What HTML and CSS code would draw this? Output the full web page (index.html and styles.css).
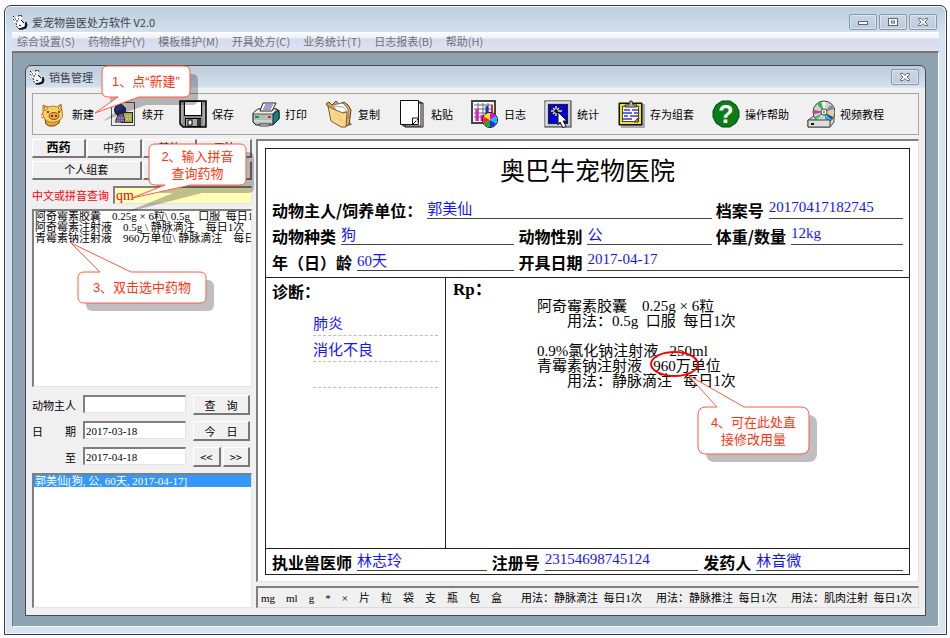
FILE: index.html
```html
<!DOCTYPE html>
<html lang="zh-CN">
<head>
  <meta charset="UTF-8" />
  <title>爱宠物兽医处方软件 V2.0</title>
  <link rel="stylesheet" href="styles.css">
</head>
<body>
  <svg class="defs" width="0" height="0">
    <symbol id="cat" viewBox="0 0 16 16">
      <path d="M1 3l2 1 1-2 2 1 3-1 1 2-1 3 3 3 1 3-1 2H6l-2-3-1-4-2-1z" fill="#fff" />
      <path d="M1 2l2 2M1 5l2 2M6 2l3-1 1 2M4 9l1 4 2 2h5" fill="none" stroke="#111" stroke-dasharray="2 1" />
      <path d="M9 6l3 3M3 5h1M6 5h1M4 7h2M7 11l2 1" stroke="#111" fill="none" />
      <path d="M14 8l1 3-1 3-3 1-4 0 3-1 3-1z" fill="#111" stroke="#111" />
    </symbol>
    <symbol id="cross" viewBox="0 0 12 10">
      <path d="M1.500 1.500h2.500l2 2 2-2h2.500v1l-2.500 2.500 2.500 2.500v1h-2.500l-2-2-2 2h-2.500v-1l2.500-2.500-2.500-2.500z" fill="#fff" stroke="#5b6577" />
    </symbol>
  </svg>

  <div class="window">
    <div class="title-bar">
      <svg class="cat"><use href="#cat" /></svg>
      <span class="caption">爱宠物兽医处方软件 V2.0</span>
      <button class="win-btn" aria-label="最小化">
        <svg viewBox="0 0 12 10"><rect x="1.500" y="4.500" width="9" height="3" fill="#fff" stroke="#5b6577" /></svg>
      </button>
      <button class="win-btn" aria-label="还原">
        <svg viewBox="0 0 12 10"><rect x="1.500" y="1.500" width="9" height="7" fill="#fff" stroke="#5b6577" /><rect x="4.500" y="4" width="3" height="2" fill="#fff" stroke="#5b6577" /></svg>
      </button>
      <button class="win-btn" aria-label="关闭"><svg><use href="#cross" /></svg></button>
    </div>

    <nav class="menu-bar">
      <a href="#">综合设置(S)</a>
      <a href="#">药物维护(Y)</a>
      <a href="#">模板维护(M)</a>
      <a href="#">开具处方(C)</a>
      <a href="#">业务统计(T)</a>
      <a href="#">日志报表(B)</a>
      <a href="#">帮助(H)</a>
    </nav>

    <div class="mdi">
      <div class="child">
        <div class="child-title">
          <svg class="cat"><use href="#cat" /></svg>
          <span class="caption">销售管理</span>
          <button class="win-btn" aria-label="关闭"><svg><use href="#cross" /></svg></button>
        </div>

        <!-- 工具栏 -->
        <div class="toolbar">
          <div class="tool-group file-tools">
            <button class="tool">
              <svg viewBox="0 0 28 28">
                <path d="M6 19l1 5 3 2h5l5-3 1-4z" fill="#eda437" stroke="#70430d" />
                <path d="M4 5l5 2q5-2 9 0l4-3 1 7q2 6-2 9-6 4-13 1-5-3-4-10z" fill="#fbcf68" stroke="#bc7921" />
                <path d="M5 6l4 2-3 3zM22 5l-3 3 3 3z" fill="#ffe9a0" stroke="#bc7921" />
                <ellipse cx="15" cy="16" rx="5" ry="3.500" fill="#f1a33c" stroke="#975315" />
                <path d="M13 15v2M17 15v2M9 11v2M20 11v2" stroke="#321" stroke-width="1.500" />
                <path d="M2 15l2-1M2 17l2 1" stroke="#bc7921" />
              </svg>新建
            </button>
            <button class="tool">
              <svg viewBox="0 0 28 28">
                <rect x="2.500" y="2.500" width="23" height="23" fill="#ececec" stroke="#555" />
                <circle cx="11" cy="10" r="5.500" fill="#203480" stroke="#112" />
                <rect x="12.500" y="12.500" width="11" height="10" fill="#a7aa4b" stroke="#222" />
                <path d="M14 16h8M14 19h8" stroke="#e4dd7b" stroke-dasharray="2 1" />
                <path d="M6 22l4-9h4l2 9z" fill="#79529d" stroke="#222" />
                <path d="M6 18h10M6 21h11" stroke="#d4baf0" stroke-dasharray="1 1" />
              </svg>续开
            </button>
            <button class="tool">
              <svg viewBox="0 0 28 28">
                <path d="M1 1h26v26H4l-3-3z" fill="#8b8b8b" stroke="#000" stroke-width="1.500" />
                <rect x="5.500" y="1.500" width="17" height="14" fill="#fff" stroke="#000" />
                <path d="M3 3v20M25 5v20" stroke="#c5c5c5" />
                <rect x="6.500" y="18.500" width="15" height="8" fill="#aaa" stroke="#000" />
                <rect x="9" y="20" width="4" height="5" fill="#fff" stroke="#000" />
                <rect x="18" y="19" width="4" height="7" fill="#333" />
              </svg>保存
            </button>
          </div>
          <div class="tool-group">
            <button class="tool">
              <svg viewBox="0 0 28 28">
                <path d="M1 13l5-4h19l2 3v7l-6 6H4l-3-3z" fill="#b4beb9" stroke="#111" />
                <path d="M1 13l5-4h19l-4 5H1z" fill="#edf0ec" stroke="#555" />
                <path d="M21 14l6-4v9l-6 6z" fill="#14847b" stroke="#123" />
                <path d="M8 11l3-8h13l-4 8z" fill="#fff" stroke="#222" />
                <path d="M13 5h8M12 7h8M11 9h8" stroke="#3a3fa8" />
                <path d="M3 17h4" stroke="#0b9e3b" stroke-width="2" />
                <path d="M16 17h3" stroke="#d22" stroke-width="2" />
                <path d="M2 21h18" stroke="#e9f0ed" />
                <path d="M7 24h12l-3 2H8z" fill="#fff" stroke="#333" />
              </svg>打印
            </button>
            <button class="tool">
              <svg viewBox="0 0 28 28">
                <path d="M15 26l12-1-2-3-2 2z" fill="#777" />
                <path d="M1 4l3-2 3 3 4-4 3 3 5-2 4 3 3 5-2 15-5 1z" fill="#dda84f" stroke="#654016" />
                <path d="M7 5l11-2 5 6v9z" fill="#fff" stroke="#777" />
                <path d="M9 6l9 1 4 4-9 3z" fill="#fff" stroke="#aaa" />
                <path d="M3 6l5 3 10 4 4-1-1 15-5 0-10-6z" fill="#f9d790" stroke="#805a25" />
                <path d="M9 13l9 4M9 17l9 5M13 13l4 9" stroke="#edb963" stroke-dasharray="1 1" />
              </svg>复制
            </button>
            <button class="tool">
              <svg viewBox="0 0 28 28">
                <path d="M7 3h18v24H7zM5 2h18v24H5z" fill="#fff" stroke="#111" />
                <path d="M2.500 .5h18v24h-18z" fill="#fff" stroke="#111" />
                <path d="M14.500 24v-6h6M15 24l5-5" fill="none" stroke="#111" />
                <path d="M17 20h3v3z" fill="#bbb" />
              </svg>粘贴
            </button>
            <button class="tool">
              <svg viewBox="0 0 28 28">
                <rect x="1" y="1" width="23" height="22" fill="#fff" stroke="#444" stroke-width="2" />
                <path d="M3 5h19M3 9h19M3 13h19M3 17h19M7 3v18M12 3v18M17 3v18" stroke="#666" />
                <path d="M6 9v12M11 15v6" stroke="#e514dc" stroke-width="3" />
                <path d="M16 6v9" stroke="#1530df" stroke-width="3" />
                <path d="M21 5v9" stroke="#ed2020" stroke-width="2" />
                <circle cx="19" cy="20" r="7.500" fill="#fff" stroke="#111" />
                <path d="M19 20v-7a7 7 0 0 1 6 3.500z" fill="#e0e" /><path d="M19 20l6-3.500a7 7 0 0 1 0 7z" fill="#00c9ed" />
                <path d="M19 20l6 3.500a7 7 0 0 1-6 3.500z" fill="#1633df" /><path d="M19 20v7a7 7 0 0 1-6-3.500z" fill="#05ae2f" />
                <path d="M19 20l-6 3.500a7 7 0 0 1 0-7z" fill="#f22" /><path d="M19 20l-6-3.500a7 7 0 0 1 6-3.500z" fill="#f8e818" />
              </svg>日志
            </button>
            <button class="tool">
              <svg viewBox="0 0 28 28">
                <rect x="1" y="1" width="26" height="26" fill="#c6c6c6" stroke="#333" />
                <path d="M2 26V2h24" fill="none" stroke="#fff" />
                <rect x="4.500" y="4.500" width="19" height="19" fill="#0000d8" stroke="#222" />
                <path d="M12 6v3M12 13v3M7 11h3M14 11h4M9 8l2 2M15 8l-2 2M9 14l2-2M14 13l2 2" stroke="#ffeb20" stroke-width="1.500" />
                <path d="M14 12l9 9-4 0 3 5-3 2-3-6-2 3z" fill="#fff" stroke="#111" />
              </svg>统计
            </button>
            <button class="tool">
              <svg viewBox="0 0 28 28">
                <path d="M4 4h24v24H4z" fill="#aaa" />
                <rect x="1.500" y="2.500" width="24" height="23" rx="1" fill="#111" />
                <rect x="3" y="4" width="21" height="20" fill="#ede21e" />
                <rect x="5.500" y="6.500" width="16" height="15" fill="#fff" stroke="#444" />
                <path d="M7 10h6M15 10h6M6 13h9M17 13h4M7 16h4M13 16h8M6 19h9" stroke="#3438db" stroke-width="1.500" />
                <path d="M17 22l4-4v4z" fill="#aaa" stroke="#333" />
                <path d="M8 7V5h4l1-4h2l1 4h4v2z" fill="#b5b5a5" stroke="#333" />
              </svg>存为组套
            </button>
            <button class="tool">
              <svg viewBox="0 0 28 28">
                <path d="M10 1h8l6 4 3 6v6l-3 6-6 4h-8l-6-4-3-6v-6l3-6z" fill="#087e14" stroke="#042" />
                <text class="help-mark" x="14" y="23" text-anchor="middle">?</text>
              </svg>操作帮助
            </button>
            <button class="tool">
              <svg viewBox="0 0 28 28">
                <path d="M1 20l6-4h20v6l-4 5H1z" fill="#ddd" stroke="#444" />
                <path d="M1 20h22v7" fill="none" stroke="#888" />
                <circle cx="17" cy="12" r="11" fill="#cfcfcf" stroke="#444" />
                <path d="M17 12L10 4l4-2z" fill="#26b936" /><path d="M17 12L15 2h4z" fill="#f4f4f4" />
                <path d="M17 12l7-7 3 4z" fill="#888" /><path d="M17 12l-10-2v4z" fill="#df2abf" />
                <path d="M17 12l-9 5 2 2z" fill="#22cb44" /><path d="M17 12l2 10 4-2z" fill="#15b9c9" />
                <path d="M17 12l10 2-2 4z" fill="#e9e233" /><path d="M17 12l7 8 2-3z" fill="#2742d6" />
                <circle cx="17" cy="12" r="3" fill="#fff" stroke="#444" />
                <circle cx="17" cy="12" r="1" fill="#555" />
                <path d="M1 20h17l5 0v7H1z" fill="#ddd" stroke="#444" />
                <path d="M4 24h3" stroke="#111" stroke-width="2" />
              </svg>视频教程
            </button>
          </div>

          <div class="callout callout-new">
            <svg>
              <path class="shade" d="M14 8h76q6 0 6 6v19q0 6-6 6H44L1 55l23-16H14q-6 0-6-6V14q0-6 6-6z" />
              <path class="bubble" d="M6 0h76q6 0 6 6v19q0 6-6 6H37L-7 47l23-16H6q-6 0-6-6V6q0-6 6-6z" />
            </svg>
            <p>1、点“新建”</p>
          </div>
        </div>

        <div class="workspace">
          <!-- 左侧: 药物与病历查询 -->
          <div class="sidebar">
            <div class="tabs">
              <button class="btn active">西药</button>
              <button class="btn">中药</button>
              <button class="btn">其他</button>
              <button class="btn">用法</button>
            </div>
            <div class="tabs">
              <button class="btn">个人组套</button>
              <button class="btn" aria-label="医院组套"></button>
            </div>
            <div class="search">
              <label for="pinyin">中文或拼音查询</label>
              <input id="pinyin" class="box" type="text" value="qm">
            </div>
            <ul class="list drugs" role="listbox" aria-label="药物">
              <li role="option">阿奇霉素胶囊　0.25g × 6粒\ 0.5g   口服  每日1次</li>
              <li role="option">阿奇霉素注射液　0.5g \ 静脉滴注　每日1次</li>
              <li role="option">青霉素钠注射液　960万单位\ 静脉滴注　每日1次</li>
            </ul>

            <div class="filter">
              <label for="owner-q">动物主人</label>
              <input id="owner-q" class="box" type="text">
              <div class="filter-btns"><button class="btn">查　询</button></div>
              <label for="from-q" class="spread"><span>日</span><span>期</span></label>
              <input id="from-q" class="box" type="text" value="2017-03-18">
              <div class="filter-btns"><button class="btn">今　日</button></div>
              <label for="to-q">至</label>
              <input id="to-q" class="box" type="text" value="2017-04-18">
              <div class="filter-btns">
                <button class="btn">&lt;&lt;</button>
                <button class="btn">&gt;&gt;</button>
              </div>
            </div>
            <ul class="list records" role="listbox" aria-label="处方记录">
              <li role="option" aria-selected="true" class="picked">郭美仙[狗, 公, 60天, 2017-04-17]</li>
            </ul>

            <div class="callout callout-search">
              <svg>
                <path class="shade" d="M14 8h85q6 0 6 6v29q0 6-6 6H53L-25 69l49-20H14q-6 0-6-6V14q0-6 6-6z" />
                <path class="bubble" d="M6 0h85q6 0 6 6v29q0 6-6 6H42L-17 54 16 41H6q-6 0-6-6V6q0-6 6-6z" />
              </svg>
              <p>2、输入拼音<br>查询药物</p>
            </div>
            <div class="callout callout-pick">
              <svg>
                <rect class="shade" x="8" y="8" width="128" height="31" rx="6" />
                <path class="bubble" d="M6 0h16L-7-29 53 0h69q6 0 6 6v19q0 6-6 6H6q-6 0-6-6V6q0-6 6-6z" />
              </svg>
              <p>3、双击选中药物</p>
            </div>
          </div>

          <!-- 右侧: 处方笺 -->
          <div class="main">
            <div class="paper">
              <div class="sheet">
                <h1>奥巴牛宠物医院</h1>
                <div class="fields">
                  <div class="field wide"><label for="owner">动物主人/饲养单位：</label><input id="owner" type="text" value="郭美仙"></div>
                  <div class="field"><label for="file-no">档案号</label><input id="file-no" type="text" value="20170417182745"></div>
                  <div class="field"><label for="kind">动物种类</label><input id="kind" type="text" value="狗"></div>
                  <div class="field"><label for="sex">动物性别</label><input id="sex" type="text" value="公"></div>
                  <div class="field"><label for="weight">体重/数量</label><input id="weight" type="text" value="12kg"></div>
                  <div class="field"><label for="age">年（日）龄</label><input id="age" type="text" value="60天"></div>
                  <div class="field wide"><label for="day">开具日期</label><input id="day" type="text" value="2017-04-17"></div>
                </div>
                <div class="content">
                  <div class="diagnosis">
                    <label for="diag-1">诊断：</label>
                    <input id="diag-1" type="text" value="肺炎">
                    <input type="text" value="消化不良" aria-label="诊断 2">
                    <input type="text" aria-label="诊断 3">
                  </div>
                  <div class="rx">
                    <label for="rx-text">Rp：</label>
                    <textarea id="rx-text" spellcheck="false">阿奇霉素胶囊　0.25g × 6粒
　　用法：0.5g  口服  每日1次

0.9%氯化钠注射液   250ml
青霉素钠注射液   960万单位
　　用法：静脉滴注   每日1次</textarea>
                    <div class="dose-mark"></div>
                    <div class="callout callout-dose">
                      <svg>
                        <rect class="shade" x="8" y="8" width="111" height="47" rx="8" />
                        <path class="bubble" d="M8 0h11L-10-32 46 0h57q8 0 8 8v31q0 8-8 8H8q-8 0-8-8V8q0-8 8-8z" />
                      </svg>
                      <p>4、可在此处直<br>接修改用量</p>
                    </div>
                  </div>
                </div>
                <div class="signatures">
                  <div class="field"><label for="vet">执业兽医师</label><input id="vet" type="text" value="林志玲"></div>
                  <div class="field"><label for="reg-no">注册号</label><input id="reg-no" type="text" value="23154698745124"></div>
                  <div class="field"><label for="giver">发药人</label><input id="giver" type="text" value="林音微"></div>
                </div>
              </div>
            </div>

            <div class="quick-bar">
              <div class="units">
                <button>mg</button>
                <button>ml</button>
                <button>g</button>
                <button>*</button>
                <button>×</button>
                <button>片</button>
                <button>粒</button>
                <button>袋</button>
                <button>支</button>
                <button>瓶</button>
                <button>包</button>
                <button>盒</button>
              </div>
              <div class="usages">
                <button>用法：静脉滴注&nbsp; 每日1次</button>
                <button>用法：静脉推注&nbsp; 每日1次</button>
                <button>用法：肌肉注射&nbsp; 每日1次</button>
              </div>
            </div>
          </div>
        </div>
      </div>
    </div>
  </div>
</body>
</html>
```

FILE: styles.css
```css
* {
  box-sizing: border-box;
}
body {
  margin: 0;
  padding: 5px 3px 3px 4px;
  min-height: 100vh;
  display: flex;
  background: #fff;
  font-family: "Noto Sans CJK SC", sans-serif;
  font-size: 11px;
  line-height: 16px;
  color: #000;
}
button, input, textarea {
  font: inherit;
  color: inherit;
  margin: 0;
  padding: 0;
  border: 0;
  border-radius: 0;
  background: none;
  outline: none;
}
input, textarea, .list, .quick-bar button {
  font-family: "Liberation Serif", "Noto Sans CJK SC", serif;
}
.defs {
  position: absolute;
}

/* 主窗口 */
.window {
  flex: 1;
  min-width: 0;
  display: flex;
  flex-direction: column;
  padding: 0 7px 7px;
  border: 1px solid #333b44;
  border-radius: 7px 7px 0 0;
  background: linear-gradient(#becbd9, #d6e4f2 30px);
  box-shadow: inset 0 0 0 1px #f2f7fb;
}
.title-bar, .child-title {
  display: flex;
  align-items: center;
  gap: 2px;
  color: #3c434b;
}
.title-bar {
  height: 26px;
  padding: 5px 2px 0 0;
}
.caption {
  flex: 1;
  padding-left: 2px;
}
.cat {
  width: 16px;
  height: 16px;
}
.win-btn {
  width: 28px;
  height: 16px;
  display: flex;
  align-items: center;
  justify-content: center;
  border: 1px solid #8798ae;
  border-radius: 2px;
  background: linear-gradient(#c9d6e4, #bccbdc);
  box-shadow: inset 0 0 0 1px #dbe5ef;
}
.win-btn svg {
  width: 12px;
  height: 10px;
}
.menu-bar {
  display: flex;
  gap: 13px;
  height: 19px;
  padding: 1px 5px;
  background: linear-gradient(#fff, #eef0f9 6px, #d6daee 7px, #dfe3f3);
}
.menu-bar a {
  color: #6f7278;
  text-decoration: none;
  white-space: nowrap;
}
.mdi {
  flex: 1;
  display: flex;
  padding: 12px 12px 10px;
  border: 1px solid #fff;
  border-top: 2px solid #777;
  border-left-color: #777;
  background: #8fa2b1;
}

/* 销售管理 */
.child {
  flex: 1;
  min-width: 0;
  display: flex;
  flex-direction: column;
  padding: 0 6px 7px;
  border: 1px solid #424b54;
  border-radius: 6px 6px 0 0;
  background: linear-gradient(#becbd9, #d3e0ee 21px, #f0f0f0 22px);
}
.child-title {
  height: 22px;
}
.child-title .cat {
  margin-left: -3px;
}
.toolbar {
  position: relative;
  display: flex;
  gap: 18px;
  height: 42px;
  margin-top: 5px;
  padding: 0 6px;
  border: 1px solid #a5a5a5;
}
.tool-group {
  display: flex;
  gap: 18px;
}
.file-tools {
  gap: 15px;
}
.tool {
  display: flex;
  align-items: center;
  gap: 5px;
  white-space: nowrap;
}
.tool svg {
  width: 28px;
  height: 28px;
  flex-shrink: 0;
}
.help-mark {
  font: bold 25px "Liberation Sans", sans-serif;
  fill: #fff;
}
.workspace {
  flex: 1;
  display: flex;
  gap: 4px;
  padding: 4px 0 0;
}

/* 左侧 */
.sidebar {
  position: relative;
  flex: 0 0 220px;
  min-width: 0;
  display: flex;
  flex-direction: column;
}
.btn {
  flex: 1;
  height: 20px;
  border: 1px solid #fff;
  border-right: 2px solid #777;
  border-bottom: 2px solid #777;
  background: #f0f0f0;
  line-height: 16px;
}
.tabs {
  display: flex;
  gap: 1px;
  margin-bottom: 3px;
}
.tabs .btn {
  height: 19px;
  line-height: 14px;
  padding-bottom: 2px;
}
.tabs .active {
  font-size: 12px;
  font-weight: bold;
}
.box, .list {
  border: 1px solid #e3e3e3;
  border-top: 2px solid #7f7f7f;
  border-left: 2px solid #7f7f7f;
  background: #fff;
}
.box {
  min-width: 0;
  height: 18px;
  padding-left: 1px;
}
.search {
  display: flex;
  align-items: center;
  gap: 4px;
  margin: 3px 0 5px;
  color: #f00;
}
.search .box {
  flex: 1;
  background: #ffffb9;
  font-size: 14px;
}
.list {
  margin: 0;
  padding: 0;
  list-style: none;
  overflow: hidden;
  line-height: 11px;
}
.list li {
  padding: 0 1px;
  white-space: pre;
}
.drugs {
  flex: 4 1 0;
}
.records {
  flex: 3 1 0;
}
.list .picked {
  background: #39f;
  color: #fff;
  line-height: 12px;
}
.filter {
  display: grid;
  grid-template-columns: 44px 103px 57px;
  column-gap: 7px;
  row-gap: 6px;
  margin: 8px 0 6px;
}
.filter label {
  text-align: right;
  line-height: 20px;
}
.filter .spread {
  display: flex;
  justify-content: space-between;
}
.filter-btns {
  display: flex;
  gap: 2px;
}

/* 处方笺 */
.main {
  flex: 1;
  min-width: 0;
  display: flex;
  flex-direction: column;
  gap: 4px;
}
.paper {
  flex: 1;
  display: flex;
  padding: 7px 8px 6px 7px;
  border: 1px solid #e3e3e3;
  border-top: 2px solid #7f7f7f;
  border-left: 2px solid #7f7f7f;
  background: #fff;
}
.sheet {
  flex: 1;
  min-width: 0;
  display: flex;
  flex-direction: column;
  border: 1px solid #222;
}
.sheet h1 {
  margin: 0;
  padding-bottom: 4px;
  font-size: 25px;
  font-weight: normal;
  line-height: 40px;
  text-align: center;
}
.fields, .signatures {
  display: grid;
  padding: 0 6px;
}
.fields {
  grid-template-columns: 242fr 193fr 187fr;
  grid-auto-rows: 26px;
  column-gap: 4px;
  padding-bottom: 6px;
}
.signatures {
  grid-template-columns: 214fr 206fr 199fr;
  grid-auto-rows: 22px;
  column-gap: 5px;
  padding-bottom: 3px;
}
.field {
  display: flex;
  align-items: flex-end;
  gap: 5px;
  min-width: 0;
}
.wide {
  grid-column: span 2;
}
.field label, .diagnosis label {
  font-size: 16px;
  font-weight: bold;
  line-height: 18px;
  white-space: nowrap;
}
.field input {
  flex: 1;
  min-width: 0;
  height: 22px;
  border-bottom: 1px solid #444;
}
.field input, .diagnosis input {
  font-size: 15px;
  color: #1414ff;
}
.content {
  flex: 1;
  display: flex;
  border-top: 1px solid #222;
  border-bottom: 1px solid #222;
}
.diagnosis {
  flex: 0 0 180px;
  min-width: 0;
  display: flex;
  flex-direction: column;
  padding: 4px 7px 0 6px;
  border-right: 1px solid #222;
}
.diagnosis label {
  margin-bottom: 10px;
}
.diagnosis input {
  min-width: 0;
  height: 26px;
  margin-left: 41px;
  border-bottom: 1px dashed #bbb;
}
.rx {
  position: relative;
  flex: 1;
  min-width: 0;
  display: flex;
  flex-direction: column;
  padding: 3px 7px 0;
}
.rx label {
  font: bold 17px "Liberation Serif", "Noto Sans CJK SC", serif;
  line-height: 18px;
}
.rx textarea {
  flex: 1;
  margin-left: 84px;
  font-size: 15px;
  line-height: 15px;
  resize: none;
  overflow: hidden;
}
.quick-bar {
  display: flex;
  align-items: center;
  gap: 19px;
  height: 22px;
  padding-left: 3px;
  border: 1px solid #dcdcdc;
  border-top: 2px solid #7f7f7f;
  border-left: 2px solid #7f7f7f;
  white-space: nowrap;
}
.units, .usages {
  display: flex;
}
.units {
  gap: 11px;
}
.usages {
  gap: 14px;
}

/* 操作提示 */
.callout {
  position: absolute;
  z-index: 5;
  display: flex;
  align-items: center;
  justify-content: center;
  color: #ff3510;
  font: 13px "Liberation Sans", "Noto Sans CJK SC", sans-serif;
  line-height: 17px;
  text-align: center;
  white-space: nowrap;
  pointer-events: none;
}
.callout svg {
  position: absolute;
  top: 0;
  left: 0;
  width: 100%;
  height: 100%;
  overflow: visible;
}
.callout p {
  position: relative;
  margin: 0;
}
.bubble {
  fill: #fff;
  stroke: #ff5a3c;
}
.shade {
  fill: #000;
  fill-opacity: 0.25;
}
.callout-new {
  left: 69px;
  top: -28px;
  width: 88px;
  height: 31px;
}
.callout-search {
  left: 117px;
  top: 5px;
  width: 97px;
  height: 41px;
}
.callout-pick {
  left: 46px;
  top: 133px;
  width: 128px;
  height: 31px;
}
.callout-dose {
  left: 252px;
  top: 129px;
  width: 111px;
  height: 47px;
}
.dose-mark {
  position: absolute;
  left: 204px;
  top: 73px;
  width: 49px;
  height: 26px;
  border: 2px solid #f00;
  border-radius: 50%;
}
```
